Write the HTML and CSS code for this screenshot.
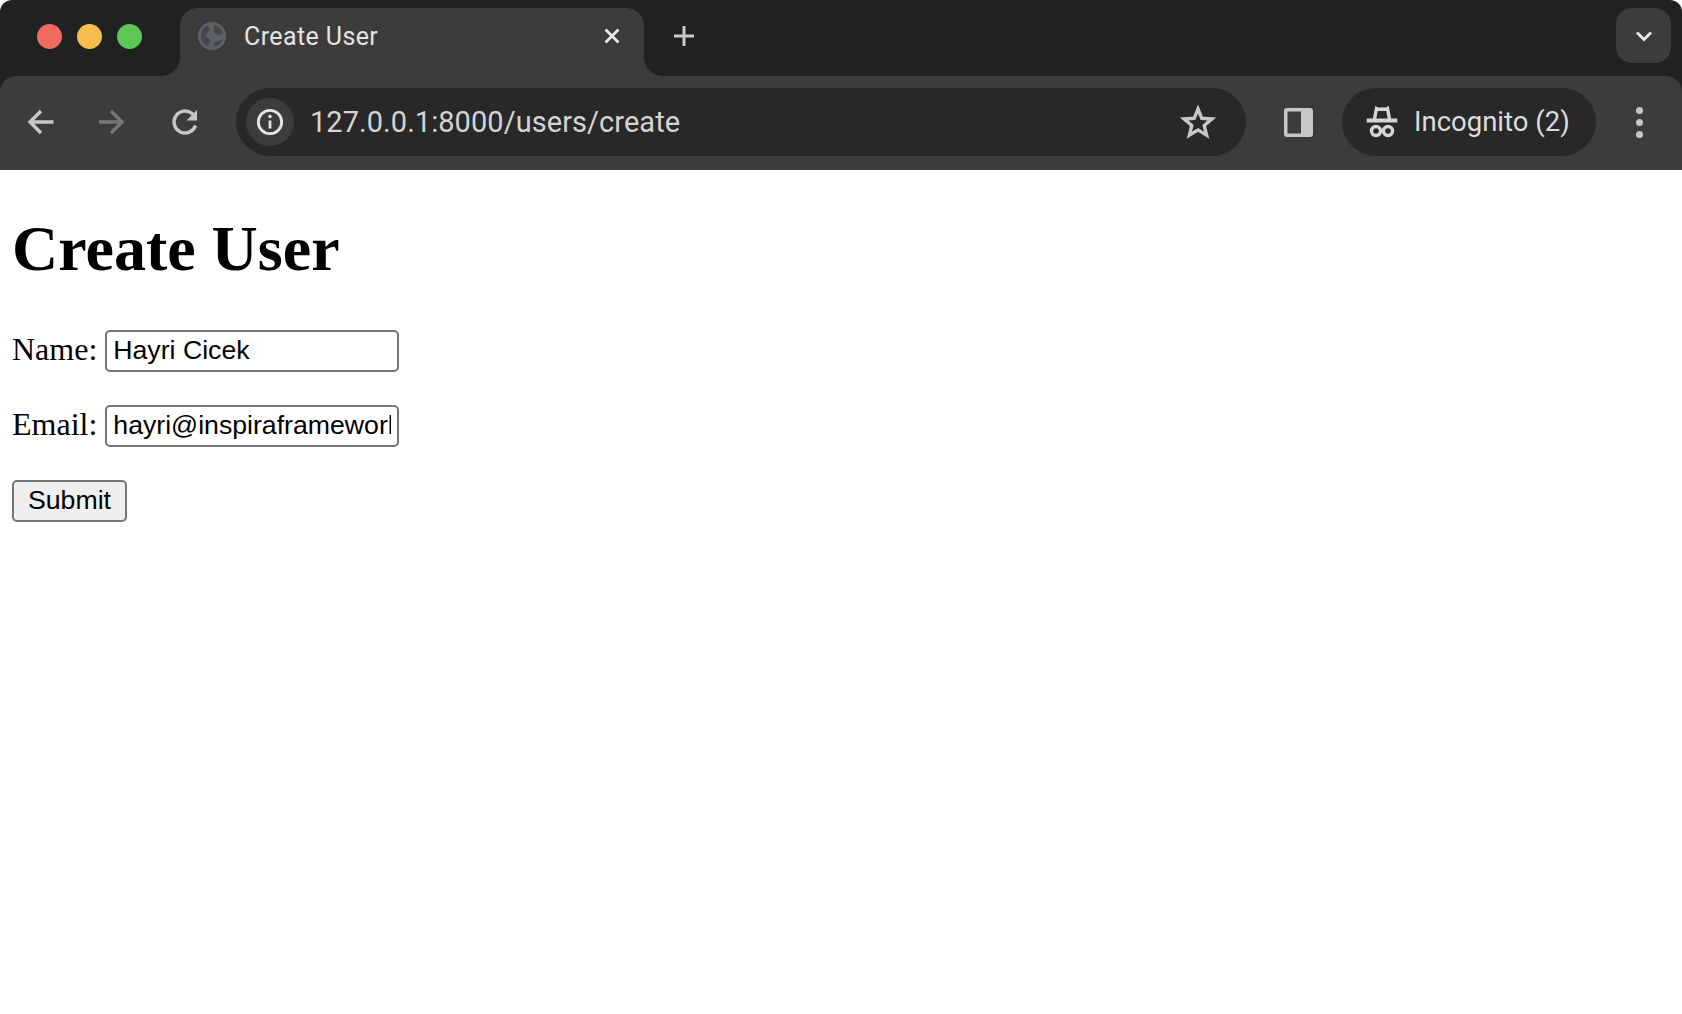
FILE: index.html
```html
<!DOCTYPE html>
<html lang="en">
<head>
<meta charset="utf-8">
<title>Create User</title>
<link rel="stylesheet" href="styles.css">
</head>
<body>
<header class="chrome">
  <div class="tabstrip">
    <div class="lights">
      <span class="light red"></span>
      <span class="light yellow"></span>
      <span class="light green"></span>
    </div>
    <div class="tab">
      <svg class="favicon" viewBox="0 0 28 28">
        <circle cx="14" cy="14" r="14" fill="#5c6068"/>
        <path d="M9.500 3.500C5.500 5 3 9 3 14 3 18.500 5.500 22 9.500 24C11 22 13 21 12.500 18.500 12 16 8.500 16 8 13.500 7.800 11 11 10 11.500 7.500 11.500 6 10.500 4.800 9.500 3.500Z" fill="#45474b"/>
        <path d="M16.500 3.300C20.500 4 23.500 7 24.800 11.500 23 13 21 13 19 12.500 16.500 11.500 15 9.500 15.500 7 15.800 5.500 16 4.300 16.500 3.300ZM24.800 16.500C24 20 21 23.500 17 24.700 15.500 23.500 15 22 16 20.800 17.500 19.200 21.500 20 24.800 16.500Z" fill="#45474b"/>
      </svg>
      <span class="tab-title">Create User</span>
      <svg class="tab-close" viewBox="0 0 18 18"><path d="M2.500 2.500 15.500 15.500M15.500 2.500 2.500 15.500"/></svg>
    </div>
    <svg class="new-tab" viewBox="0 0 24 24"><path d="M12 2V22M2 12H22"/></svg>
    <div class="tab-search">
      <svg viewBox="0 0 18 12"><path d="M2 2.500 9 9.500 16 2.500"/></svg>
    </div>
  </div>
  <div class="toolbar">
    <svg class="tool back" viewBox="0 0 40 40"><path d="M32.500 20H9.500M20 9 9 20 20 31"/></svg>
    <svg class="tool forward" viewBox="0 0 40 40"><path d="M8 20H30.500M20 9 31 20 20 31"/></svg>
    <svg class="tool reload" viewBox="0 0 40 40"><path d="M30.500 23.500A11 11 0 1 1 27 11.500L30 14.500"/><path class="solid" d="M32 8V18.500H21.500Z"/></svg>
    <div class="omnibox">
      <div class="info">
        <svg viewBox="0 0 30 30"><circle cx="15" cy="15" r="11.700"/><path d="M15 13.500V21.500"/><circle class="dot" cx="15" cy="9.500" r="1.700"/></svg>
      </div>
      <span class="url">127.0.0.1:8000/users/create</span>
      <svg class="star" viewBox="0 0 36 36"><path d="M18 5 21.800 14.300 31.800 15 24.200 21.500 26.600 31.200 18 25.900 9.400 31.200 11.800 21.500 4.200 15 14.200 14.300Z"/></svg>
    </div>
    <svg class="side-panel" viewBox="0 0 29 29">
      <rect class="panel-frame" width="29" height="29" rx="3"/>
      <rect class="panel-hole" x="3.500" y="3.500" width="13.500" height="22"/>
    </svg>
    <div class="incognito">
      <svg class="hat" viewBox="0 0 32 32">
        <path class="line" d="M8.500 13 10.500 2.500C12.500 3.500 14 3.500 16 3 18 3.500 19.500 3.500 21.500 2.500L23.500 13"/>
        <path class="brim" d="M.7 14.500H31.300"/>
        <circle class="line" cx="10" cy="25" r="4.500"/>
        <circle class="line" cx="22" cy="25" r="4.500"/>
        <path class="line" d="M14 25H18"/>
      </svg>
      <span class="incognito-label">Incognito (2)</span>
    </div>
    <div class="menu"><span></span><span></span><span></span></div>
  </div>
</header>
<main class="page">
  <h1 class="heading">Create User</h1>
  <form>
    <div class="row"><label>Name: <input class="field" type="text" value="Hayri Cicek"></label></div>
    <div class="row"><label>Email: <input class="field" type="text" value="hayri@inspiraframework.com"></label></div>
    <button class="submit" type="button">Submit</button>
  </form>
</main>
</body>
</html>
```
FILE: styles.css
```css
* { box-sizing: border-box; }
html, body { margin: 0; height: 100%; background: #fff; overflow: hidden; }
body { font-family: "Liberation Serif", "Times New Roman", serif; color: #000; }

.chrome { height: 170px; background: #202221; border-radius: 12px 12px 0 0; overflow: hidden; }

.tabstrip { height: 76px; display: flex; align-items: flex-start; position: relative; }
.lights { width: 180px; height: 73px; padding-left: 37px; display: flex; align-items: center; gap: 15.200px; }
.light { width: 25px; height: 25px; border-radius: 50%; }
.red { background: #ef6b5f; }
.yellow { background: #f5be4f; }
.green { background: #5ec653; }

.tab {
  width: 464px; height: 68px; margin-top: 8px; padding: 0 23px 12px 18px;
  background: #3c3c3c; border-radius: 18px 18px 0 0;
  display: flex; align-items: center; position: relative;
}
.tab::before, .tab::after { content: ""; position: absolute; bottom: 0; width: 18px; height: 18px; }
.tab::before { left: -18px; background: radial-gradient(circle at 0 0, transparent 17.500px, #3c3c3c 18px); }
.tab::after { right: -18px; background: radial-gradient(circle at 100% 0, transparent 17.500px, #3c3c3c 18px); }
.favicon { width: 28px; height: 28px; flex: none; }
.tab-title { margin-left: 18px; font: 400 25px/1 Roboto, sans-serif; letter-spacing: .4px; color: #e3e3e3; }
.tab-close { width: 18px; height: 18px; margin-left: auto; fill: none; stroke: #e8e8e8; stroke-width: 2.800; }

.new-tab { width: 24px; height: 24px; margin: 24px 0 0 28px; fill: none; stroke: #c8c8c8; stroke-width: 3; }
.tab-search {
  width: 55px; height: 55px; margin: 8px 11px 0 auto; background: #3c3c3c; border-radius: 16px;
  display: flex; align-items: center; justify-content: center;
}
.tab-search svg { width: 18px; height: 12px; fill: none; stroke: #e8e8e8; stroke-width: 2.800; }

.toolbar {
  height: 94px; padding: 0 0 2px 21px; background: #3c3c3c; border-radius: 16px 16px 0 0;
  display: flex; align-items: center; position: relative;
}
.tool { width: 40px; height: 40px; flex: none; fill: none; stroke: #c7c7c7; stroke-width: 3.400; }
.tool .solid { fill: #c7c7c7; stroke: none; }
.forward { margin-left: 30px; stroke: #777; }
.reload { margin-left: 34px; }

.omnibox {
  width: 1010px; height: 68px; margin-left: 31px; padding: 0 30px 0 10px; flex: none;
  background: #282828; border-radius: 34px; display: flex; align-items: center;
}
.info { width: 48px; height: 48px; border-radius: 50%; background: #3c3c3c; display: flex; align-items: center; justify-content: center; }
.info svg { width: 30px; height: 30px; fill: none; stroke: #e6e6e6; stroke-width: 2.800; }
.info .dot { fill: #e6e6e6; stroke: none; }
.url { margin-left: 16px; font: 400 29px/1 Roboto, sans-serif; letter-spacing: .05px; color: #d4d4d4; white-space: nowrap; }
.star { width: 36px; height: 36px; margin-left: auto; fill: none; stroke: #c7c7c7; stroke-width: 3.400; stroke-linejoin: miter; }

.side-panel { width: 29px; height: 29px; margin-left: 38px; flex: none; }
.panel-frame { fill: #c7c7c7; }
.panel-hole { fill: #3c3c3c; }

.incognito {
  width: 254px; height: 68px; margin-left: 29px; padding-left: 24px; flex: none;
  background: #282828; border-radius: 34px; display: flex; align-items: center;
}
.hat { width: 32px; height: 32px; flex: none; }
.line { fill: none; stroke: #d6d6d6; stroke-width: 3.400; }
.brim { fill: none; stroke: #d6d6d6; stroke-width: 4; }
.incognito-label { margin-left: 16px; font: 400 27.500px/1 Roboto, sans-serif; color: #dcdcdc; white-space: nowrap; }

.menu { width: 8px; margin-left: 40px; display: flex; flex-direction: column; gap: 5px; }
.menu span { width: 7px; height: 7px; border-radius: 50%; background: #c7c7c7; }

.page { padding-left: 12px; }
.heading { margin: 42px 0 44px; font: 700 64px/73.500px "Liberation Serif", "Times New Roman", serif; }
.row { margin-bottom: 33px; height: 42px; font-size: 32px; line-height: 38px; white-space: nowrap; }
.field {
  width: 294px; height: 42px; padding: 0 6px; border: 2px solid #767676; border-radius: 5px;
  background: #fff; color: #000; font: 400 26.670px "Liberation Sans", Arial, sans-serif; outline: none;
  vertical-align: top;
}
.submit {
  display: block; width: 115px; height: 42px; padding: 0; border: 2px solid #767676; border-radius: 5px;
  background: #efefef; color: #000; font: 400 26.670px "Liberation Sans", Arial, sans-serif;
}
```
